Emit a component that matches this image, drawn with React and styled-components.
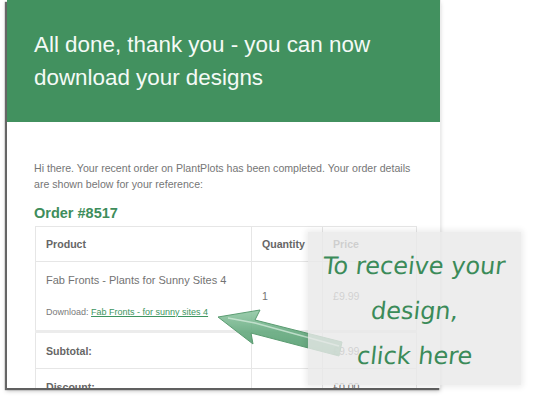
import styled, { createGlobalStyle } from "styled-components";

const Global = createGlobalStyle`
    html, body {
        margin: 0;
        padding: 0;
        background: #ffffff;
        font-family: "Liberation Sans", Arial, sans-serif;
    }
`

export default function App() {
    return (
        <Page>
            <Global />
            <Card>
                <Header>
                    <h1>All done, thank you - you can now download your designs</h1>
                </Header>
                <Body>
                    <Intro>
                        Hi there. Your recent order on PlantPlots has been completed. Your order details
                        are shown below for your reference:
                    </Intro>
                    <OrderTitle>Order #8517</OrderTitle>
                    <Table>
                        <colgroup>
                            <col style={{ width: 216 }} />
                            <col style={{ width: 71 }} />
                            <col />
                        </colgroup>
                        <thead>
                            <tr>
                                <Th>Product</Th>
                                <Th>Quantity</Th>
                                <Th>Price</Th>
                            </tr>
                        </thead>
                        <tbody>
                            <ItemRow>
                                <Td>
                                    <ProductName>Fab Fronts - Plants for Sunny Sites 4</ProductName>
                                    <Download>
                                        Download: <a href="#">Fab Fronts - for sunny sites 4</a>
                                    </Download>
                                </Td>
                                <Td>1</Td>
                                <Td>£9.99</Td>
                            </ItemRow>
                            <TotalRow first>
                                <Th as="td">Subtotal:</Th>
                                <Td />
                                <Td>£9.99</Td>
                            </TotalRow>
                            <TotalRow>
                                <Th as="td">Discount:</Th>
                                <Td />
                                <Td>£0.00</Td>
                            </TotalRow>
                        </tbody>
                    </Table>
                </Body>
            </Card>

            <Arrow width="534" height="399" viewBox="0 0 534 399">
                <defs>
                    <linearGradient id="arrowFill" x1="0" y1="0" x2="0" y2="1">
                        <stop offset="0" stopColor="#93c9a6" />
                        <stop offset="0.5" stopColor="#64a97e" />
                        <stop offset="1" stopColor="#4f9a6b" />
                    </linearGradient>
                </defs>
                <polygon
                    points="218,317 260,310 255,320 342,342 339,356 251,333 253,344"
                    fill="url(#arrowFill)"
                    stroke="#4a9263"
                    strokeWidth="1"
                    strokeLinejoin="round"
                    opacity="0.9"
                />
                <polyline
                    points="228,318 255,323 339,346"
                    fill="none"
                    stroke="#cfe9d8"
                    strokeWidth="1.5"
                    opacity="0.8"
                />
            </Arrow>

            <Callout>
                <p>To receive your</p>
                <p>design,</p>
                <p>click here</p>
            </Callout>
        </Page>
    )
}

const Page = styled.div`
    position: relative;
    width: 534px;
    height: 399px;
    overflow: hidden;
    padding-left: 7px;
    box-sizing: border-box;
`

const Card = styled.div`
    width: 434px;
    height: 388px;
    overflow: hidden;
    background: #ffffff;
    border-right: 1px solid #ececec;
    box-sizing: border-box;
    box-shadow: -2px 2px 1px rgba(60, 60, 60, 0.75), -1px 3px 4px rgba(0, 0, 0, 0.25);
`

const Header = styled.div`
    background: #42915f;
    height: 122px;
    padding: 28px 20px 0 27px;
    box-sizing: border-box;

    h1 {
        margin: 0;
        font-weight: 400;
        font-size: 22.4px;
        line-height: 33px;
        color: #f4faf6;
    }
`

const Body = styled.div`
    padding: 38px 0 0 27px;
`

const Intro = styled.p`
    margin: 0;
    width: 386px;
    font-size: 10.6px;
    line-height: 16px;
    color: #767676;
`

const OrderTitle = styled.h2`
    margin: 11px 0 0 0;
    font-size: 14.5px;
    font-weight: 700;
    color: #3e8d5b;
    line-height: 20px;
`

const Table = styled.table`
    margin: 3px 0 0 1px;
    width: 382px;
    border-collapse: collapse;
    table-layout: fixed;
    border: 1px solid #e6e6e6;
    font-size: 10.6px;
    color: #737373;
`

const Th = styled.th`
    text-align: left;
    font-weight: 700;
    color: #666666;
    padding: 0 10px;
    height: 34px;
    border: 1px solid #e6e6e6;
`

const Td = styled.td`
    padding: 0 10px;
    border: 1px solid #e6e6e6;
    vertical-align: middle;
`

const ItemRow = styled.tr`
    height: 70px;
`

const TotalRow = styled.tr`
    height: 37px;

    td {
        border-top: ${({ first }) => (first ? "3px solid #ececec" : "1px solid #e6e6e6")};
    }
`

const ProductName = styled.div`
    font-size: 11px;
    color: #737373;
    margin-top: -2px;
`

const Download = styled.div`
    margin-top: 21px;
    font-size: 9px;
    color: #7a7a7a;

    a {
        color: #3e9560;
        text-decoration: underline;
    }
`

const Arrow = styled.svg`
    position: absolute;
    left: 0;
    top: 0;
    pointer-events: none;
`

const Callout = styled.div`
    position: absolute;
    left: 308px;
    top: 232px;
    width: 213px;
    height: 153px;
    background: rgba(233, 233, 233, 0.8);
    box-shadow: 0 0 6px 2px rgba(0, 0, 0, 0.08);
    display: flex;
    flex-direction: column;
    align-items: center;
    justify-content: center;
    padding-top: 5px;
    box-sizing: border-box;

    p {
        margin: 0;
        font-family: "Comic Sans MS", "DejaVu Sans", cursive;
        font-size: 24px;
        line-height: 45px;
        color: #3b8b59;
        white-space: nowrap;
        transform: skewX(-6deg);
    }
`
